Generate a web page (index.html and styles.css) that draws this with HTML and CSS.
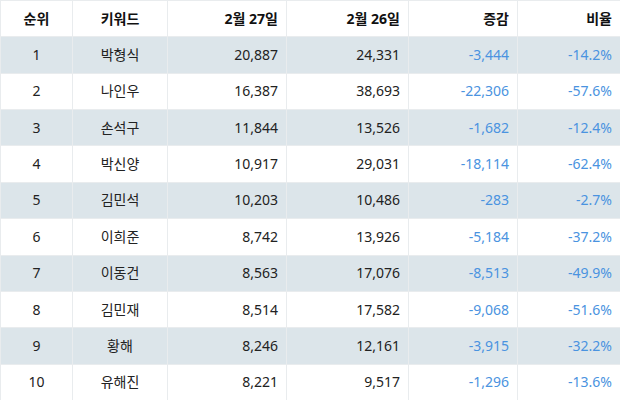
FILE: index.html
```html
<!DOCTYPE html>
<html lang="ko">
<head>
<meta charset="utf-8">
<link rel="stylesheet" href="styles.css">
</head>
<body>
<table class="rank">
<colgroup>
<col class="c1"><col class="c2"><col class="c3"><col class="c4"><col class="c5"><col class="c6">
</colgroup>
<thead>
<tr><th class="ctr">순위</th><th class="ctr">키워드</th><th>2월 27일</th><th>2월 26일</th><th>증감</th><th>비율</th></tr>
</thead>
<tbody>
<tr><td class="ctr">1</td><td class="ctr">박형식</td><td>20,887</td><td>24,331</td><td class="neg">-3,444</td><td class="neg">-14.2%</td></tr>
<tr><td class="ctr">2</td><td class="ctr">나인우</td><td>16,387</td><td>38,693</td><td class="neg">-22,306</td><td class="neg">-57.6%</td></tr>
<tr><td class="ctr">3</td><td class="ctr">손석구</td><td>11,844</td><td>13,526</td><td class="neg">-1,682</td><td class="neg">-12.4%</td></tr>
<tr><td class="ctr">4</td><td class="ctr">박신양</td><td>10,917</td><td>29,031</td><td class="neg">-18,114</td><td class="neg">-62.4%</td></tr>
<tr><td class="ctr">5</td><td class="ctr">김민석</td><td>10,203</td><td>10,486</td><td class="neg">-283</td><td class="neg">-2.7%</td></tr>
<tr><td class="ctr">6</td><td class="ctr">이희준</td><td>8,742</td><td>13,926</td><td class="neg">-5,184</td><td class="neg">-37.2%</td></tr>
<tr><td class="ctr">7</td><td class="ctr">이동건</td><td>8,563</td><td>17,076</td><td class="neg">-8,513</td><td class="neg">-49.9%</td></tr>
<tr><td class="ctr">8</td><td class="ctr">김민재</td><td>8,514</td><td>17,582</td><td class="neg">-9,068</td><td class="neg">-51.6%</td></tr>
<tr><td class="ctr">9</td><td class="ctr">황해</td><td>8,246</td><td>12,161</td><td class="neg">-3,915</td><td class="neg">-32.2%</td></tr>
<tr><td class="ctr">10</td><td class="ctr">유해진</td><td>8,221</td><td>9,517</td><td class="neg">-1,296</td><td class="neg">-13.6%</td></tr>
</tbody>
</table>
</body>
</html>
```
FILE: styles.css
```css
html, body {
  margin: 0;
  padding: 0;
  background: #ffffff;
}
.rank {
  width: 620px;
  border-collapse: collapse;
  table-layout: fixed;
  font-family: "Noto Sans", "Noto Sans CJK KR", sans-serif;
  font-size: 14px;
  color: #222222;
}
.c1 { width: 72px; }
.c2 { width: 95px; }
.c3 { width: 119px; }
.c4 { width: 122px; }
.c5 { width: 109px; }
.c6 { width: 103px; }
.rank th, .rank td {
  height: 36.36px;
  padding: 0 8px;
  text-align: right;
  border: 1px solid #e9ecee;
  box-sizing: border-box;
  line-height: 1;
  white-space: nowrap;
}
.rank th {
  font-weight: 700;
  color: #111111;
}
.rank .ctr { text-align: center; }
.rank tbody tr:nth-child(odd) td { background: #dce5ea; }
.rank .neg { color: #4a93e0; }
```
